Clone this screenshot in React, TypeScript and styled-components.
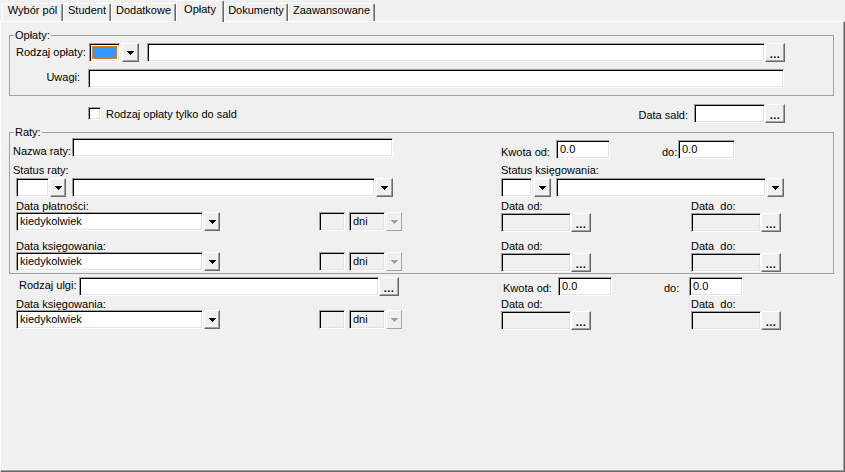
import React from 'react';
import styled, { createGlobalStyle, css } from 'styled-components';

const GlobalStyle = createGlobalStyle`
  html, body {
    margin: 0;
    padding: 0;
    background: #f0f0f0;
  }
  body {
    font-family: "Liberation Sans", Arial, sans-serif;
    font-size: 11px;
    color: #000;
  }
`;

const tabs = [
  { label: 'Wybór pól', w: 61 },
  { label: 'Student', w: 48 },
  { label: 'Dodatkowe', w: 65 },
  { label: 'Opłaty', w: 48, active: true },
  { label: 'Dokumenty', w: 64 },
  { label: 'Zaawansowane', w: 87 },
];

// classic 3D edges
const sunken = css`
  box-sizing: border-box;
  border: 1px solid;
  border-color: #a0a0a0 #fff #fff #a0a0a0;
  box-shadow: inset 1px 1px 0 #000, inset -1px -1px 0 #e3e3e3;
`;

const raised = css`
  box-sizing: border-box;
  border: 1px solid;
  border-color: #fff #696969 #696969 #fff;
  box-shadow: inset -1px -1px 0 #a0a0a0;
  background: #f0f0f0;
`;

const Arrow = ({ color = '#000' }: { color?: string }) => (
  <svg width="7" height="4" viewBox="0 0 7 4" shapeRendering="crispEdges">
    <path d="M0 0h7v1h-1v1h-1v1h-1v1h-1v-1h-1v-1h-1v-1h-1z" fill={color} />
  </svg>
);

const App = () => {
  return (
    <>
      <GlobalStyle />
      <Window>
        <TabBar>
          {tabs.map((t) => (
            <Tab key={t.label} $w={t.w} $active={t.active}>
              {t.label}
            </Tab>
          ))}
        </TabBar>
        <Panel>
          <GroupBox $mt={7} $pt={2} $pb={7}>
            <Legend>Opłaty:</Legend>
            <Row>
              <Label $ml={6} $w={73} $mt={3}>
                Rodzaj opłaty:
              </Label>
              <ColorBox>
                <ColorFill />
              </ColorBox>
              <DropButton $w={17} $ml={2}>
                <Arrow />
              </DropButton>
              <TextBox $w={618} $ml={8} />
              <DotsButton>...</DotsButton>
            </Row>
            <Row $mt={7}>
              <Label $w={78} $mt={2} $right>
                Uwagi:
              </Label>
              <TextBox $w={696} />
            </Row>
          </GroupBox>

          <Row $mt={8} $pl={87} $pr={59}>
            <CheckBox />
            <Label $ml={5} $mt={4}>
              Rodzaj opłaty tylko do sald
            </Label>
            <Spacer />
            <Label $mt={5} $pr={6}>
              Data sald:
            </Label>
            <TextBox $w={71} />
            <DotsButton>...</DotsButton>
          </Row>

          <GroupBox $mt={3} $pt={0} $pb={1}>
            <Legend>Raty:</Legend>
            <Row>
              <Side>
                <Label $ml={3} $w={59} $mt={7}>
                  Nazwa raty:
                </Label>
                <TextBox $w={321} />
              </Side>
              <Side $right>
                <Label $w={55} $mt={8}>
                  Kwota od:
                </Label>
                <TextBox $w={54} $mt={2}>0.0</TextBox>
                <Label $ml={52} $w={16} $mt={8}>
                  do:
                </Label>
                <TextBox $w={57} $mt={2}>0.0</TextBox>
              </Side>
            </Row>
            <Row $mt={5}>
              <Side>
                <Label $ml={3}>Status raty:</Label>
              </Side>
              <Side $right>
                <Label>Status księgowania:</Label>
              </Side>
            </Row>
            <Row $mt={2}>
              <Side>
                <Combo ml={6} w={33} gap={1} bw={16} />
                <Combo ml={6} w={303} gap={1} />
              </Side>
              <Side $right>
                <Combo w={31} gap={2} />
                <Combo ml={5} w={210} gap={1} />
              </Side>
            </Row>
            <DateLabels label="Data płatności:" mt={3} />
            <PeriodRow mt={0} />
            <DateLabels label="Data księgowania:" mt={8} />
            <PeriodRow mt={0} />
          </GroupBox>

          <Section>
            <Row $mt={3}>
              <Side>
                <Label $ml={9} $w={60} $mt={2}>
                  Rodzaj ulgi:
                </Label>
                <TextBox $w={300} />
                <DotsButton>...</DotsButton>
              </Side>
              <Side $right>
                <Label $ml={2} $w={55} $mt={5}>
                  Kwota od:
                </Label>
                <TextBox $w={54}>0.0</TextBox>
                <Label $ml={52} $w={25} $mt={5}>
                  do:
                </Label>
                <TextBox $w={54}>0.0</TextBox>
              </Side>
            </Row>
            <DateLabels label="Data księgowania:" mt={2} />
            <PeriodRow mt={0} />
          </Section>
        </Panel>
      </Window>
    </>
  );
};

interface ComboProps {
  w: number;
  ml?: number;
  gap?: number;
  bw?: number;
  value?: string;
  disabled?: boolean;
}

const Combo = ({ w, ml = 0, gap = 2, bw = 17, value, disabled }: ComboProps) => (
  <ComboWrap $ml={ml}>
    <TextBox $w={w} $disabled={disabled}>
      {value}
    </TextBox>
    <DropButton $w={bw} $ml={gap} $disabled={disabled}>
      <Arrow color={disabled ? '#a0a0a0' : '#000'} />
    </DropButton>
  </ComboWrap>
);

const DateLabels = ({ label, mt }: { label: string; mt: number }) => (
  <Row $mt={mt}>
    <Side>
      <Label $ml={6}>{label}</Label>
    </Side>
    <Side $right>
      <Label $w={190}>Data od:</Label>
      <Label>Data  do:</Label>
    </Side>
  </Row>
);

const PeriodRow = ({ mt }: { mt: number }) => (
  <Row $mt={mt}>
    <Side>
      <Combo ml={6} w={187} gap={1} bw={16} value="kiedykolwiek" />
      <TextBox $w={26} $ml={99} $disabled />
      <Combo ml={4} w={36} gap={1} bw={16} value="dni" disabled />
    </Side>
    <Side $right>
      <TextBox $w={70} $mt={1} $disabled />
      <DotsButton $mt={1}>...</DotsButton>
      <TextBox $w={70} $ml={100} $mt={1} $disabled />
      <DotsButton $mt={1}>...</DotsButton>
    </Side>
  </Row>
);

const Window = styled.div`
  width: 845px;
  height: 472px;
  display: flex;
  flex-direction: column;
  overflow: hidden;
`;

const TabBar = styled.div`
  height: 21px;
  flex: none;
  display: flex;
  align-items: flex-end;
  padding-left: 2px;
`;

const Tab = styled.div<{ $w: number; $active?: boolean }>`
  position: relative;
  z-index: ${({ $active }) => ($active ? 1 : 0)};
  box-sizing: border-box;
  flex: none;
  width: ${({ $w }) => $w}px;
  height: ${({ $active }) => ($active ? 22 : 18)}px;
  margin-bottom: ${({ $active }) => ($active ? -1 : 0)}px;
  padding-top: ${({ $active }) => ($active ? 2 : 0)}px;
  border-top: 1px solid #fff;
  border-left: 1px solid #fff;
  border-right: 1px solid #696969;
  border-radius: 2px 2px 0 0;
  box-shadow: inset -1px 0 0 #a0a0a0;
  background: #f0f0f0;
  line-height: 12px;
  text-align: center;
  white-space: nowrap;
`;

const Panel = styled.div`
  box-sizing: border-box;
  flex: none;
  width: 845px;
  height: 451px;
  border-top: 1px solid #fff;
  border-left: 1px solid #fff;
  border-right: 1px solid #696969;
  border-bottom: 1px solid #696969;
  box-shadow: inset -1px -1px 0 #a0a0a0;
`;

const GroupBox = styled.fieldset<{ $mt: number; $pt: number; $pb: number }>`
  box-sizing: border-box;
  width: 825px;
  min-inline-size: 0;
  margin: ${({ $mt }) => $mt}px 0 0 8px;
  padding: ${({ $pt }) => $pt}px 0 ${({ $pb }) => $pb}px 0;
  border: 1px solid #a0a0a0;
`;

const Legend = styled.legend`
  margin-left: 4px;
  padding: 0 1px;
  font-size: 11px;
  line-height: 12px;
`;

const Section = styled.div`
  padding-left: 9px;
`;

const Row = styled.div<{ $mt?: number; $pl?: number; $pr?: number }>`
  display: flex;
  align-items: flex-start;
  margin-top: ${({ $mt }) => $mt ?? 0}px;
  padding-left: ${({ $pl }) => $pl ?? 0}px;
  padding-right: ${({ $pr }) => $pr ?? 0}px;
`;

const Side = styled.div<{ $right?: boolean }>`
  display: flex;
  align-items: flex-start;
  flex: ${({ $right }) => ($right ? '1' : 'none')};
  width: ${({ $right }) => ($right ? 'auto' : '491px')};
`;

const Spacer = styled.div`
  flex: 1;
`;

const Label = styled.span<{
  $w?: number;
  $ml?: number;
  $mt?: number;
  $pr?: number;
  $right?: boolean;
}>`
  display: block;
  flex: none;
  box-sizing: border-box;
  width: ${({ $w }) => ($w ? `${$w}px` : 'auto')};
  margin-left: ${({ $ml }) => $ml ?? 0}px;
  margin-top: ${({ $mt }) => $mt ?? 0}px;
  padding-right: ${({ $pr, $right }) => $pr ?? ($right ? 8 : 0)}px;
  line-height: 12px;
  text-align: ${({ $right }) => ($right ? 'right' : 'left')};
  white-space: pre;
`;

const TextBox = styled.div<{
  $w: number;
  $ml?: number;
  $mt?: number;
  $disabled?: boolean;
}>`
  ${sunken};
  flex: none;
  width: ${({ $w }) => $w}px;
  height: 19px;
  margin-left: ${({ $ml }) => $ml ?? 0}px;
  margin-top: ${({ $mt }) => $mt ?? 0}px;
  padding: 0 3px;
  background: ${({ $disabled }) => ($disabled ? '#f0f0f0' : '#fff')};
  line-height: 17px;
  white-space: nowrap;
  overflow: hidden;
`;

const ColorBox = styled.div`
  ${sunken};
  flex: none;
  width: 31px;
  height: 19px;
  padding: 2px;
  background: #fff;
`;

const ColorFill = styled.div`
  box-sizing: border-box;
  width: 100%;
  height: 100%;
  background: #3399ff;
  outline: 1px dotted #e08020;
  outline-offset: -1px;
`;

const ComboWrap = styled.div<{ $ml: number }>`
  display: flex;
  flex: none;
  margin-left: ${({ $ml }) => $ml}px;
`;

const DropButton = styled.div<{ $w: number; $ml: number; $disabled?: boolean }>`
  ${raised};
  flex: none;
  display: flex;
  align-items: center;
  justify-content: center;
  width: ${({ $w }) => $w}px;
  height: 19px;
  margin-left: ${({ $ml }) => $ml}px;
  padding-top: 1px;
  ${({ $disabled }) =>
    $disabled &&
    css`
      border-color: #fff #a0a0a0 #a0a0a0 #fff;
      box-shadow: none;
    `}
`;

const DotsButton = styled.div<{ $mt?: number }>`
  ${raised};
  flex: none;
  width: 20px;
  height: 19px;
  margin-top: ${({ $mt }) => $mt ?? 0}px;
  padding-top: 4px;
  font-weight: bold;
  line-height: 12px;
  text-align: center;
  letter-spacing: 0.5px;
`;

const CheckBox = styled.span`
  ${sunken};
  display: block;
  flex: none;
  width: 13px;
  height: 13px;
  margin-top: 3px;
  background: #fff;
`;

export default App;
